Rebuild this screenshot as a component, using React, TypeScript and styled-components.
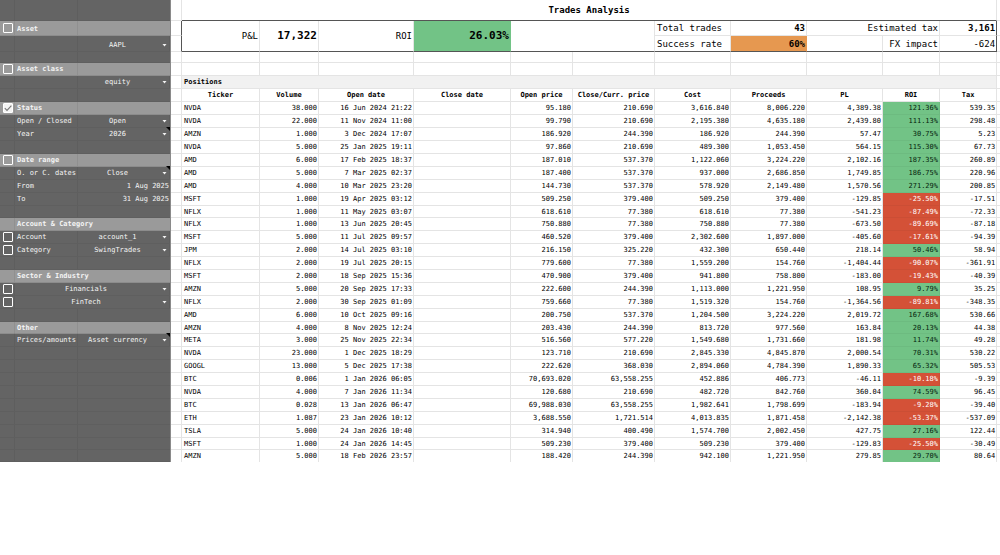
import React, { useId } from "react";
import styled, { createGlobalStyle, css } from "styled-components";

const line = "#e4e4e4";
const frame = "#555";
const green = "#72c386";
const mono = '"DejaVu Sans Mono", "Liberation Mono", monospace';

const GlobalStyle = createGlobalStyle`
  * { box-sizing: border-box; }
  body { margin: 0; background: #fff; color: #000; font: 7px/12px ${mono}; }
`;

const Page = styled.div`
  display: grid;
  grid-template-columns: 171px 1fr;
  align-items: start;
`;

/* ---------- filter panel ---------- */

const Panel = styled.form`
  background: #646464;
  border-right: 1px solid #8a8a8a;
  color: #f4f4f4;
`;

const PanelRows = styled.div`
  & > :nth-child(9n),
  & > :last-child {
    height: 12px;
  }
`;

const PanelRow = styled.div<{ $height?: number; $heading?: boolean; $wide?: boolean }>`
  position: relative;
  display: grid;
  grid-template-columns: ${(p) => (p.$wide ? "15px 1fr" : "15px 63px 1fr")};
  height: ${(p) => p.$height ?? 13}px;
  border-bottom: 1px solid ${(p) => (p.$heading ? "#8c8c8c" : "#5f5f5f")};
  background: ${(p) => (p.$heading ? "#9a9a9a" : "transparent")};
  font-weight: ${(p) => (p.$heading ? 700 : 400)};
`;

const PanelCell = styled.div<{ $open?: boolean }>`
  display: flex;
  align-items: flex-end;
  min-width: 0;
  border-right: 1px solid ${(p) => (p.$open ? "transparent" : "rgba(0, 0, 0, 0.06)")};
  &:last-child { border-right: 0; }
`;

const Label = styled.label`
  padding-left: 2px;
  white-space: nowrap;
`;

const Heading = styled.span`
  padding-left: 2px;
  white-space: nowrap;
`;

const CheckCell = styled(PanelCell)`
  position: relative;
  align-items: center;
  justify-content: flex-end;
  padding-right: 1px;
`;

const Check = styled.input`
  appearance: none;
  flex: none;
  width: 10px;
  height: 10px;
  margin: 0;
  border: 1px solid #fff;
  border-radius: 1px;
  &:checked { background: #f4f4f4; }
`;

const Tick = styled.svg`
  position: absolute;
  right: 1px;
  width: 10px;
  height: 10px;
  pointer-events: none;
`;

const Picker = styled.select`
  appearance: none;
  width: 100%;
  height: 12px;
  margin: 0;
  padding: 0 12px 0 0;
  border: 0;
  background: transparent;
  color: inherit;
  font: inherit;
  text-align: center;
  text-align-last: center;
`;

const Arrow = styled.svg`
  position: absolute;
  right: 3px;
  bottom: 4px;
  width: 5px;
  height: 3px;
  pointer-events: none;
`;

const NoteMark = styled.span`
  position: absolute;
  top: -1px;
  right: 0;
  border-top: 4px solid #000;
  border-left: 4px solid transparent;
`;

const DateInput = styled.input`
  width: 100%;
  height: 12px;
  margin: 0;
  padding: 0 1px 0 0;
  border: 0;
  background: transparent;
  color: inherit;
  font: inherit;
  text-align: right;
`;

type Filter = {
  label?: string;
  heading?: boolean;
  check?: boolean;
  select?: string;
  date?: string;
  note?: boolean;
  wide?: boolean;
  name?: string;
  height?: number;
};

function FilterRow(f: Filter) {
  const id = useId();
  const name = f.label ?? f.name;
  const hasCheck = f.check !== undefined;
  const target = f.select || f.date ? id : hasCheck ? id + "c" : undefined;
  return (
    <PanelRow $height={f.height} $heading={f.heading} $wide={f.wide}>
      <CheckCell>
        {hasCheck && <Check type="checkbox" id={id + "c"} aria-label={name} defaultChecked={f.check} />}
        {f.check && (
          <Tick viewBox="0 0 10 10">
            <path d="M1.8 5.2 4 7.4 8.4 2.6" fill="none" stroke="#777" strokeWidth="1.1" />
          </Tick>
        )}
      </CheckCell>
      {!f.wide && (
        <PanelCell $open={f.heading && (f.label ?? "").length > 14}>
          {f.label && (target ? <Label htmlFor={target}>{f.label}</Label> : <Heading>{f.label}</Heading>)}
        </PanelCell>
      )}
      <PanelCell>
        {f.select && (
          <Picker id={id} aria-label={name} defaultValue={f.select}>
            <option>{f.select}</option>
          </Picker>
        )}
        {f.date && <DateInput id={id} type="text" defaultValue={f.date} />}
      </PanelCell>
      {f.select && (
        <Arrow viewBox="0 0 5 3">
          <path d="M0.5 0h4L2.5 2.6z" fill="#f4f4f4" />
        </Arrow>
      )}
      {f.note && <NoteMark />}
    </PanelRow>
  );
}

const topFilters: Filter[] = [
  { height: 21 },
  { height: 15, label: "Asset", heading: true, check: false },
  { height: 16, name: "Asset value", select: "AAPL" },
  { height: 11 },
  { label: "Asset class", heading: true, check: false },
  { name: "Asset class value", select: "equity" },
  {},
];

const filters: Filter[] = [
  { label: "Status", heading: true, check: true },
  { label: "Open / Closed", select: "Open" },
  { label: "Year", select: "2026", note: true },
  {},
  { label: "Date range", heading: true, check: false },
  { label: "O. or C. dates", select: "Close", note: true },
  { label: "From", date: "1 Aug 2025" },
  { label: "To", date: "31 Aug 2025" },
  {},
  { label: "Account & Category", heading: true },
  { label: "Account", check: false, select: "account_1" },
  { label: "Category", check: false, select: "SwingTrades" },
  {},
  { label: "Sector & Industry", heading: true },
  { name: "Sector", check: false, select: "Financials", wide: true },
  { name: "Industry", check: false, select: "FinTech", wide: true },
  {},
  { label: "Other", heading: true },
  { label: "Prices/amounts", select: "Asset currency", note: true },
  {}, {}, {}, {}, {}, {}, {}, {}, {},
];

/* ---------- sheet ---------- */

const Sheet = styled.table`
  width: 100%;
  table-layout: fixed;
  border-collapse: separate;
  border-spacing: 0;
`;

const Col = styled.col<{ $width: number }>`
  width: ${(p) => p.$width}px;
`;

const Row = styled.tr<{ $height?: number }>`
  height: ${(p) => p.$height ?? 13}px;
`;

const cell = css`
  padding: 0 1px;
  border-right: 1px solid ${line};
  border-bottom: 1px solid ${line};
  white-space: nowrap;
  line-height: 11px;
`;

const BlankCell = styled.td`
  ${cell}
  line-height: 10px;
  &:last-child { border-right: 0; }
`;

const Cell = styled.td<{ $left?: boolean }>`
  ${cell}
  padding-left: 2px;
  text-align: ${(p) => (p.$left ? "left" : "right")};
`;

const HeadCell = styled.th`
  ${cell}
  text-align: center;
`;

const RoiCell = styled(Cell)<{ $loss: boolean }>`
  background: ${(p) => (p.$loss ? "#d45137" : green)};
  border-color: ${(p) => (p.$loss ? "#cb4e35" : "#6dbb80")};
  color: ${(p) => (p.$loss ? "#fff" : "#06240e")};
`;

const TitleCell = styled.th`
  padding: 0;
  border-bottom: 1px solid ${frame};
  border-right: 1px solid ${line};
  font-size: 9px;
`;

const Stat = styled.td<{ $size?: number; $bold?: boolean; $fill?: string; $left?: boolean; $base?: boolean; $edge?: boolean }>`
  padding: 0 1px 0 2px;
  border-right: 1px solid ${(p) => (p.$edge ? frame : p.$fill ?? line)};
  border-bottom: 1px solid ${(p) => (p.$base ? frame : line)};
  background: ${(p) => p.$fill ?? "transparent"};
  font-size: ${(p) => p.$size ?? 9}px;
  font-weight: ${(p) => (p.$bold ? 700 : 400)};
  text-align: ${(p) => (p.$left ? "left" : "right")};
  white-space: nowrap;
`;

const Gutter = styled.td<{ $dark?: boolean }>`
  padding: 0;
  border-right: 1px solid ${(p) => (p.$dark ? frame : line)};
  border-bottom: 1px solid ${line};
  &:last-child { border-right: 0; }
`;

const Band = styled.th`
  ${cell}
  padding-left: 2px;
  background: #f1f1f1;
  text-align: left;
`;

const Positions = styled.tbody`
  & > tr:nth-child(9n),
  & > tr:last-child {
    height: 12px;
  }
  & > tr:nth-child(9n) > td {
    line-height: 10px;
  }
  & > tr:last-child > td {
    border-bottom: 0;
  }
`;

const widths = [11, 78, 59, 95, 97, 62, 82, 76, 76, 76, 57, 57, 3];
const heads = ["Ticker", "Volume", "Open date", "Close date", "Open price", "Close/Curr. price", "Cost", "Proceeds", "PL", "ROI", "Tax"];

const trades = `NVDA|38.000|16 Jun 2024 21:22||95.180|210.690|3,616.840|8,006.220|4,389.38|121.36%|539.35
NVDA|22.000|11 Nov 2024 11:00||99.790|210.690|2,195.380|4,635.180|2,439.80|111.13%|298.48
AMZN|1.000|3 Dec 2024 17:07||186.920|244.390|186.920|244.390|57.47|30.75%|5.23
NVDA|5.000|25 Jan 2025 19:11||97.860|210.690|489.300|1,053.450|564.15|115.30%|67.73
AMD|6.000|17 Feb 2025 18:37||187.010|537.370|1,122.060|3,224.220|2,102.16|187.35%|260.89
AMD|5.000|7 Mar 2025 02:37||187.400|537.370|937.000|2,686.850|1,749.85|186.75%|220.96
AMD|4.000|10 Mar 2025 23:20||144.730|537.370|578.920|2,149.480|1,570.56|271.29%|200.85
MSFT|1.000|19 Apr 2025 03:12||509.250|379.400|509.250|379.400|-129.85|-25.50%|-17.51
NFLX|1.000|11 May 2025 03:07||618.610|77.380|618.610|77.380|-541.23|-87.49%|-72.33
NFLX|1.000|13 Jun 2025 20:45||750.880|77.380|750.880|77.380|-673.50|-89.69%|-87.18
MSFT|5.000|11 Jul 2025 09:57||460.520|379.400|2,302.600|1,897.000|-405.60|-17.61%|-94.39
JPM|2.000|14 Jul 2025 03:10||216.150|325.220|432.300|650.440|218.14|50.46%|58.94
NFLX|2.000|19 Jul 2025 20:15||779.600|77.380|1,559.200|154.760|-1,404.44|-90.07%|-361.91
MSFT|2.000|18 Sep 2025 15:36||470.900|379.400|941.800|758.800|-183.00|-19.43%|-40.39
AMZN|5.000|20 Sep 2025 17:33||222.600|244.390|1,113.000|1,221.950|108.95|9.79%|35.25
NFLX|2.000|30 Sep 2025 01:09||759.660|77.380|1,519.320|154.760|-1,364.56|-89.81%|-348.35
AMD|6.000|10 Oct 2025 09:16||200.750|537.370|1,204.500|3,224.220|2,019.72|167.68%|530.66
AMZN|4.000|8 Nov 2025 12:24||203.430|244.390|813.720|977.560|163.84|20.13%|44.38
META|3.000|25 Nov 2025 22:34||516.560|577.220|1,549.680|1,731.660|181.98|11.74%|49.28
NVDA|23.000|1 Dec 2025 18:29||123.710|210.690|2,845.330|4,845.870|2,000.54|70.31%|530.22
GOOGL|13.000|5 Dec 2025 17:38||222.620|368.030|2,894.060|4,784.390|1,890.33|65.32%|505.53
BTC|0.006|1 Jan 2026 06:05||70,693.020|63,558.255|452.886|406.773|-46.11|-10.18%|-9.39
NVDA|4.000|7 Jan 2026 11:34||120.680|210.690|482.720|842.760|360.04|74.59%|96.45
BTC|0.028|13 Jan 2026 06:47||69,988.030|63,558.255|1,982.641|1,798.699|-183.94|-9.28%|-39.40
ETH|1.087|23 Jan 2026 10:12||3,688.550|1,721.514|4,013.835|1,871.458|-2,142.38|-53.37%|-537.09
TSLA|5.000|24 Jan 2026 10:40||314.940|400.490|1,574.700|2,002.450|427.75|27.16%|122.44
MSFT|1.000|24 Jan 2026 14:45||509.230|379.400|509.230|379.400|-129.83|-25.50%|-30.49
AMZN|5.000|18 Feb 2026 23:57||188.420|244.390|942.100|1,221.950|279.85|29.70%|80.64`
  .split("\n")
  .map((r) => r.split("|"));

function BlankRow({ height }: { height: number }) {
  return (
    <Row $height={height}>
      {widths.map((_, i) => (
        <BlankCell key={i} />
      ))}
    </Row>
  );
}

export default function App() {
  return (
    <>
      <GlobalStyle />
      <Page>
        <Panel>
          {topFilters.map((f, i) => (
            <FilterRow key={i} {...f} />
          ))}
          <PanelRows>
            {filters.map((f, i) => (
              <FilterRow key={i} {...f} />
            ))}
          </PanelRows>
        </Panel>
        <Sheet>
          <colgroup>
            {widths.map((w, i) => (
              <Col key={i} $width={w} />
            ))}
          </colgroup>
          <thead>
            <Row $height={21}>
              <Gutter />
              <TitleCell colSpan={11}>Trades Analysis</TitleCell>
              <Gutter />
            </Row>
            <Row $height={15}>
              <Gutter $dark />
              <Stat rowSpan={2} $base>P&amp;L</Stat>
              <Stat rowSpan={2} $base $bold $size={11}>17,322</Stat>
              <Stat rowSpan={2} $base>ROI</Stat>
              <Stat rowSpan={2} $base $bold $size={11} $fill={green}>26.03%</Stat>
              <Stat rowSpan={2} colSpan={2} $base />
              <Stat $left>Total trades</Stat>
              <Stat $bold>43</Stat>
              <Stat colSpan={2}>Estimated tax</Stat>
              <Stat $bold $edge>3,161</Stat>
              <Gutter />
            </Row>
            <Row $height={16}>
              <Gutter $dark />
              <Stat $left $base>Success rate</Stat>
              <Stat $bold $base $fill="#e69850">60%</Stat>
              <Stat $base />
              <Stat $base>FX impact</Stat>
              <Stat $base $edge>-624</Stat>
              <Gutter />
            </Row>
            <BlankRow height={11} />
            <BlankRow height={13} />
            <Row>
              <Gutter />
              <Band colSpan={11}>Positions</Band>
              <Gutter />
            </Row>
            <Row>
              <Gutter />
              {heads.map((h) => (
                <HeadCell key={h} scope="col">{h}</HeadCell>
              ))}
              <Gutter />
            </Row>
          </thead>
          <Positions>
            {trades.map((t, i) => (
              <Row key={i}>
                <Gutter />
                {t.map((v, j) =>
                  j === 9 ? (
                    <RoiCell key={j} $loss={v.startsWith("-")}>{v}</RoiCell>
                  ) : (
                    <Cell key={j} $left={j === 0}>{v}</Cell>
                  )
                )}
                <Gutter />
              </Row>
            ))}
          </Positions>
        </Sheet>
      </Page>
    </>
  );
}
